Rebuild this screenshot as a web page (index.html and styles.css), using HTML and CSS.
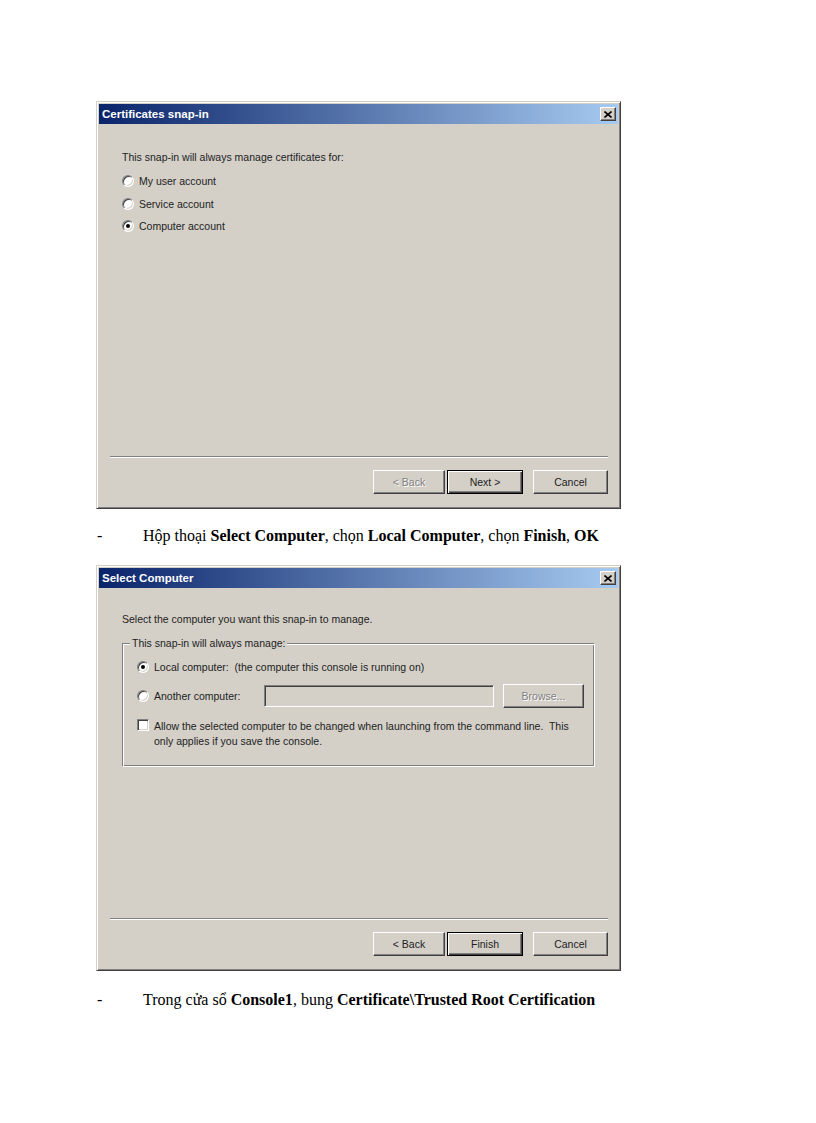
FILE: index.html
```html
<!DOCTYPE html>
<html>
<head>
<meta charset="utf-8">
<link rel="stylesheet" href="styles.css">
</head>
<body>
<div class="page">
  <div class="dialog d1">
    <div class="titlebar">
      <span class="title">Certificates snap-in</span>
      <span class="close"><svg width="8" height="7" viewBox="0 0 8 7"><path d="M0.5 0.5 L7.5 6.5 M7.5 0.5 L0.5 6.5" stroke="#000" stroke-width="1.6" fill="none"/></svg></span>
    </div>
    <div class="body b1">
      <div class="text">This snap-in will always manage certificates for:</div>
      <div class="radios">
        <div class="row"><span class="radio"></span><span>My user account</span></div>
        <div class="row"><span class="radio"></span><span>Service account</span></div>
        <div class="row"><span class="radio on"></span><span>Computer account</span></div>
      </div>
    </div>
    <div class="footer">
      <div class="sep"></div>
      <div class="buttons">
        <span class="btn back disabled">&lt; Back</span>
        <span class="btn default">Next &gt;</span>
        <span class="btn cancel">Cancel</span>
      </div>
    </div>
  </div>

  <div class="docline l1"><span class="dash">-</span><span>Hộp thoại <b>Select Computer</b>, chọn <b>Local Computer</b>, chọn <b>Finish</b>, <b>OK</b></span></div>

  <div class="dialog d2">
    <div class="titlebar">
      <span class="title">Select Computer</span>
      <span class="close"><svg width="8" height="7" viewBox="0 0 8 7"><path d="M0.5 0.5 L7.5 6.5 M7.5 0.5 L0.5 6.5" stroke="#000" stroke-width="1.6" fill="none"/></svg></span>
    </div>
    <div class="body b2">
      <div class="text">Select the computer you want this snap-in to manage.</div>
      <div class="group">
        <span class="legend">This snap-in will always manage:</span>
        <div class="grow r1"><span class="radio on"></span><span>Local computer:&nbsp; (the computer this console is running on)</span></div>
        <div class="grow r2">
          <span class="radio"></span><span class="lbl">Another computer:</span>
          <span class="input"></span>
          <span class="btn browse disabled">Browse...</span>
        </div>
        <div class="grow r3">
          <span class="check"></span>
          <span class="ctext">Allow the selected computer to be changed when launching from the command line.&nbsp; This only applies if you save the console.</span>
        </div>
      </div>
    </div>
    <div class="footer">
      <div class="sep"></div>
      <div class="buttons">
        <span class="btn back">&lt; Back</span>
        <span class="btn default">Finish</span>
        <span class="btn cancel">Cancel</span>
      </div>
    </div>
  </div>

  <div class="docline l2"><span class="dash">-</span><span>Trong cửa sổ <b>Console1</b>, bung <b>Certificate\Trusted Root Certification</b></span></div>
</div>
</body>
</html>
```

FILE: styles.css
```css
* { box-sizing: border-box; }
html, body { margin: 0; padding: 0; background: #fff; }
.page {
  padding: 101px 0 0 96px;
  width: 816px;
}
.dialog {
  width: 525px;
  background: #d4d0c8;
  border: 1px solid;
  border-color: #d4d0c8 #404040 #404040 #d4d0c8;
  box-shadow: inset 1px 1px #fff, inset -1px -1px #808080;
  padding: 2px;
  display: flex;
  flex-direction: column;
  font-family: "Liberation Sans", Arial, sans-serif;
  font-size: 10.5px;
  color: #222;
}
.d1 { height: 408px; }
.d2 { height: 406px; margin-top: 19px; }
.titlebar {
  height: 20px;
  background: linear-gradient(to right, #0a246a, #a6caf0);
  display: flex;
  align-items: center;
  justify-content: space-between;
  padding: 0 2px 0 3px;
}
.title {
  color: #fff;
  font-weight: bold;
  font-size: 11.5px;
}
.close {
  width: 16px;
  height: 14px;
  background: #d4d0c8;
  border: 1px solid;
  border-color: #fff #404040 #404040 #fff;
  box-shadow: inset -1px -1px #808080;
  display: flex;
  align-items: center;
  justify-content: center;
}
.body { flex: 1; padding-left: 23px; }
.b1 { padding-top: 26px; }
.b2 { padding-top: 24px; }
.text { line-height: 14px; height: 14px; }
.radios { margin-top: 6px; }
.row {
  height: 22.5px;
  display: flex;
  align-items: center;
  gap: 5px;
}
.radio {
  width: 12px;
  height: 12px;
  border-radius: 50%;
  background: #fff;
  border: 1px solid;
  border-color: #808080 #fff #fff #808080;
  box-shadow: inset 1px 1px #404040, inset -1px -1px #d4d0c8;
  display: inline-flex;
  align-items: center;
  justify-content: center;
  flex: none;
}
.radio.on::after {
  content: "";
  width: 4px;
  height: 4px;
  border-radius: 50%;
  background: #000;
}
.footer { padding: 0 10px 12px 11px; }
.sep {
  height: 2px;
  border-top: 1px solid #808080;
  border-bottom: 1px solid #fff;
}
.buttons {
  margin-top: 12px;
  display: flex;
  justify-content: flex-end;
  gap: 2px;
}
.btn {
  width: 75px;
  height: 24px;
  display: flex;
  align-items: center;
  justify-content: center;
  background: #d4d0c8;
  border: 1px solid;
  border-color: #fff #404040 #404040 #fff;
  box-shadow: inset -1px -1px #808080;
  color: #222;
}
.btn.back { width: 72px; }
.btn.default {
  border: 1px solid #000;
  box-shadow: inset 1px 1px #fff, inset -1px -1px #404040, inset -2px -2px #808080;
  width: 76px;
}
.btn.cancel { margin-left: 8px; }
.btn.disabled { color: #808080; text-shadow: 1px 1px #fff; }

.group {
  position: relative;
  margin-top: 17px;
  width: 473px;
  height: 124px;
  border: 1px solid;
  border-color: #808080 #fff #fff #808080;
  box-shadow: inset 1px 1px #fff, inset -1px -1px #808080;
  padding: 16px 0 0 14px;
}
.legend {
  position: absolute;
  left: 7px;
  top: -8px;
  background: #d4d0c8;
  padding: 0 2px;
  line-height: 14px;
}
.grow { display: flex; align-items: center; }
.grow .radio { margin-right: 5px; }
.r1 { height: 14px; }
.r2 { height: 24px; margin-top: 10px; }
.r2 .lbl { width: 110px; }
.input {
  width: 230px;
  height: 22px;
  border: 1px solid;
  border-color: #808080 #fff #fff #808080;
  box-shadow: inset 1px 1px #404040, inset -1px -1px #d4d0c8;
  background: #d4d0c8;
}
.btn.browse { width: 81px; margin-left: 9px; }
.r3 { margin-top: 11px; align-items: flex-start; }
.check {
  width: 12px;
  height: 12px;
  flex: none;
  background: #fff;
  border: 1px solid;
  border-color: #808080 #fff #fff #808080;
  box-shadow: inset 1px 1px #404040, inset -1px -1px #d4d0c8;
  margin-right: 5px;
}
.ctext { width: 426px; line-height: 14.5px; }

.docline {
  display: flex;
  font-family: "Liberation Serif", "Times New Roman", serif;
  font-size: 16px;
  line-height: 20px;
  color: #000;
}
.dash { width: 47px; padding-left: 1px; }
.l1 { margin-top: 17px; }
.l2 { margin-top: 19px; }
```
